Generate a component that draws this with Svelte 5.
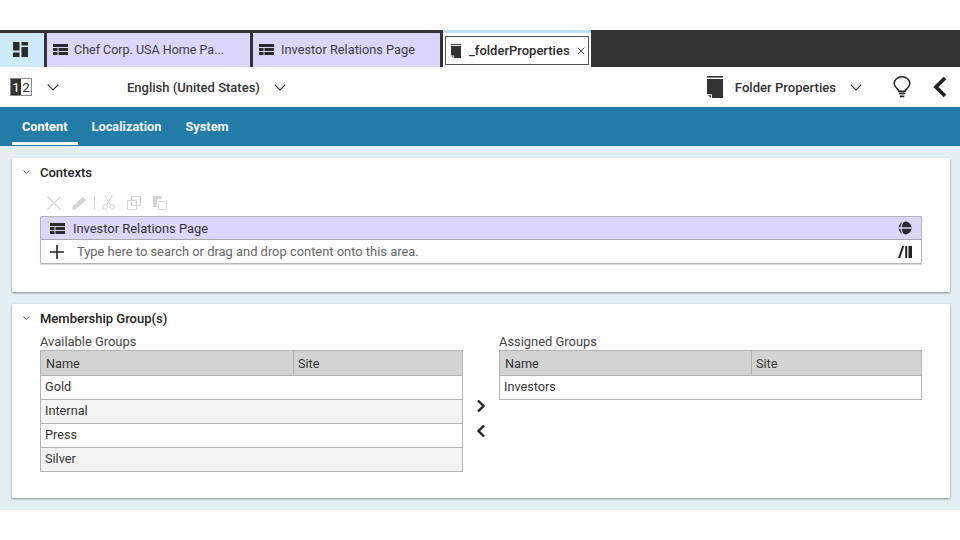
<script>
  const available = ['Gold', 'Internal', 'Press', 'Silver'];
</script>

{#snippet pageIcon()}
  <svg viewBox="0 0 15 11" width="15" height="11">
    <path d="M0 0h15v3H0z M0 4h4.500v3H0z M5.500 4H15v3H5.500z M0 8h4.500v3H0z M5.500 8H15v3H5.500z" fill="#2b2b2b" />
  </svg>
{/snippet}

{#snippet folderIcon(w, h)}
  <svg viewBox="0 0 16 22" width={w} height={h}>
    <path d="M0 0h16v1.600H0z" fill="#333" />
    <path d="M0 3h16v19H5v-3.800H0z" fill="#333" />
    <path d="M1 19.200h3V22z" fill="#333" />
  </svg>
{/snippet}

{#snippet chevron(w)}
  <svg viewBox="0 0 12 7" width={w} height={w * 7 / 12}>
    <path d="M.7.7 6 6l5.300-5.300" fill="none" stroke="#333" stroke-width="1.200" />
  </svg>
{/snippet}

{#snippet table(rows, nameWidth)}
  <div class="table">
    <div class="thead">
      <span class="th-name" style="width: {nameWidth}px">Name</span>
      <span class="th-site">Site</span>
    </div>
    {#each rows as row, i}
      <div class="row" class:odd={i % 2 === 1}>{row}</div>
    {/each}
  </div>
{/snippet}

<div class="page">
  <div class="tabbar">
    <div class="tab-home">
      <svg viewBox="0 0 15 15" width="15" height="15">
        <path d="M0 0h6.500v8.500H0z M8.500 0H15v3.500H8.500z M8.500 5H15v10H8.500z M0 10.500h6.500V15H0z" fill="#2b2b2b" />
      </svg>
    </div>
    <div class="tab tab-a">
      {@render pageIcon()}
      <span>Chef Corp. USA Home Pa...</span>
    </div>
    <div class="tab tab-b">
      {@render pageIcon()}
      <span>Investor Relations Page</span>
    </div>
    <div class="tab-active-wrap">
      <div class="tab-active">
        {@render folderIcon(10, 14)}
        <span class="active-name">_folderProperties</span>
        <svg class="close" viewBox="0 0 8 8" width="8" height="8">
          <path d="M.8.8l6.400 6.400M7.200.8.8 7.200" stroke="#444" stroke-width="1" />
        </svg>
      </div>
    </div>
    <div class="tab-rest"></div>
  </div>

  <div class="toolbar">
    <div class="version"><span class="v1">1</span><span class="v2">2</span></div>
    <span class="ver-chev">{@render chevron(12)}</span>
    <span class="lang">English (United States)</span>
    <span class="lang-chev">{@render chevron(12)}</span>
    <div class="spacer"></div>
    {@render folderIcon(16, 22)}
    <span class="doc-type">Folder Properties</span>
    <span class="doc-chev">{@render chevron(12)}</span>
    <svg class="bulb" viewBox="0 0 18 22" width="18" height="22">
      <path d="M5.800 15.200C5.400 12.800 1.200 11.200 1.200 7.400a7.800 6.600 0 0 1 15.600 0c0 3.800-4.200 5.400-4.600 7.800z" fill="none" stroke="#222" stroke-width="1.500" />
      <path d="M5.800 17.400h6.400M6.800 20.400h4.400" stroke="#222" stroke-width="1.600" />
    </svg>
    <svg class="back" viewBox="0 0 14 22" width="14" height="22">
      <path d="M12 2 3 11l9 9" fill="none" stroke="#222" stroke-width="3.800" />
    </svg>
  </div>

  <nav class="nav">
    <span class="nav-item active">Content</span>
    <span class="nav-item">Localization</span>
    <span class="nav-item">System</span>
  </nav>

  <main class="content">
    <section class="card card-contexts">
      <header class="card-head">
        {@render chevron(7)}
        <h2>Contexts</h2>
      </header>
      <div class="card-body">
        <div class="actions">
          <svg viewBox="0 0 14 14" width="14" height="14"><path d="M.5.5l13 13M13.500.5l-13 13" stroke="#d4d4d4" stroke-width="1.100" /></svg>
          <svg class="a-pen" viewBox="0 0 15 14" width="15" height="14"><path d="M0 14l1-4L11 1l3 3-10 9z" fill="#d4d4d4" /></svg>
          <span class="a-sep"></span>
          <svg class="a-cut" viewBox="0 0 13 15" width="13" height="15"><path d="M2.500 0l6 10M10.500 0l-6 10" stroke="#d4d4d4" fill="none" /><circle cx="3" cy="12" r="2.300" fill="none" stroke="#d4d4d4" /><circle cx="10" cy="12" r="2.300" fill="none" stroke="#d4d4d4" /></svg>
          <svg class="a-copy" viewBox="0 0 14 14" width="14" height="14"><path d="M4.500.5h9v9h-9z M.5 4.500h9v9h-9z" fill="#fff" stroke="#d4d4d4" /></svg>
          <svg class="a-paste" viewBox="0 0 14 14" width="14" height="14"><path d="M0 0h9v3H0z M0 3h4v8H0z" fill="#d4d4d4" /><path d="M5.500 5.500h8v8h-8z" fill="#fff" stroke="#d4d4d4" /></svg>
        </div>
        <div class="picker">
          <div class="picker-item">
            {@render pageIcon()}
            <span class="picker-name">Investor Relations Page</span>
            <svg viewBox="0 0 14 14" width="14" height="14">
              <path d="M3.800 6.300C3.900 3.300 5 1.200 7 .6c3 0 6 2 6.700 5.700z M3.800 7.700c.1 3 1.200 5.100 3.200 5.700 3 0 6-2 6.700-5.700z" fill="#2b2b2b" />
              <path d="M4.700 1C2.500 1.900 1 3.800.6 6.300h1.800C2.600 4.300 3.400 2.300 4.700 1z M4.700 13C2.500 12.100 1 10.200.6 7.700h1.800c.2 2 1 4 2.300 5.300z" fill="#2b2b2b" />
            </svg>
          </div>
          <div class="picker-search">
            <svg viewBox="0 0 14 14" width="14" height="14"><path d="M7 0v14M0 7h14" stroke="#222" stroke-width="1.600" /></svg>
            <span class="placeholder">Type here to search or drag and drop content onto this area.</span>
            <svg viewBox="0 0 14 13" width="14" height="13"><path d="M0 13 4.200 1h2.100L2.100 13z M7.200 1h2v12h-2z M10.500 1H14v12h-3.500z" fill="#222" /></svg>
          </div>
        </div>
      </div>
    </section>

    <section class="card card-groups">
      <header class="card-head">
        {@render chevron(7)}
        <h2>Membership Group(s)</h2>
      </header>
      <div class="groups">
        <div class="group">
          <div class="group-label">Available Groups</div>
          {@render table(available, 253)}
        </div>
        <div class="movers">
          <svg viewBox="0 0 10 14" width="10" height="14"><path d="M2 1.500 7.500 7 2 12.500" fill="none" stroke="#222" stroke-width="2.400" /></svg>
          <svg viewBox="0 0 10 14" width="10" height="14"><path d="M8 1.500 2.500 7 8 12.500" fill="none" stroke="#222" stroke-width="2.400" /></svg>
        </div>
        <div class="group">
          <div class="group-label">Assigned Groups</div>
          {@render table(['Investors'], 252)}
        </div>
      </div>
    </section>
  </main>
</div>

<style>
  :global(body) {
    margin: 0;
    background: #fff;
  }

  .page {
    width: 960px;
    height: 540px;
    padding-top: 30px;
    box-sizing: border-box;
    font-family: Roboto, "Liberation Sans", sans-serif;
    font-size: 13px;
    color: #333;
    overflow: hidden;
    display: flex;
    flex-direction: column;
  }

  .tabbar {
    display: flex;
    height: 37px;
    flex: none;
    background: #333;
  }

  .tab-home {
    width: 44px;
    margin-top: 3px;
    padding: 0 3px 2px 0;
    box-sizing: border-box;
    background: #cdeafa;
    display: flex;
    align-items: center;
    justify-content: center;
  }

  .tab {
    margin-top: 3px;
    margin-left: 3px;
    background: #dcd6fd;
    display: flex;
    align-items: center;
    gap: 6px;
    padding: 0 0 2px 6px;
    box-sizing: border-box;
    color: #3c3c3c;
    font-size: 12.800px;
  }

  .tab-a { width: 203px; font-size: 12.500px; }
  .tab-b { width: 187px; gap: 7px; }

  .tab-active-wrap {
    width: 148px;
    margin-left: 3px;
    background: #fff;
    border-top: 3px solid #b9e4fb;
    box-sizing: border-box;
    padding: 3px 2px 2px;
  }

  .tab-active {
    height: 100%;
    box-sizing: border-box;
    border: 1px solid #555;
    display: flex;
    align-items: center;
    padding-left: 5px;
    background: #fff;
  }

  .active-name {
    margin-left: 8px;
    font-weight: 500;
    font-size: 13px;
    color: #2b2b2b;
  }

  .close { margin-left: 7px; }

  .tab-rest {
    flex: 1;
    margin-left: 1px;
    background: #333;
  }

  .toolbar {
    height: 40px;
    flex: none;
    display: flex;
    align-items: center;
    padding-left: 10px;
    background: #fff;
    box-sizing: border-box;
  }

  .version {
    display: flex;
    width: 22px;
    height: 18px;
    font-size: 13.500px;
    line-height: 16px;
    text-align: center;
    box-sizing: border-box;
    border: 1px solid #888;
  }

  .v1 { width: 10px; background: #333; color: #fff; }
  .v2 { width: 10px; color: #333; }

  .ver-chev { margin-left: 15px; display: flex; }

  .lang {
    margin-left: 68px;
    font-weight: 500;
    font-size: 13px;
    color: #333;
  }

  .lang-chev { margin-left: 14px; display: flex; }

  .spacer { flex: 1; }

  .doc-type {
    margin-left: 12px;
    font-weight: 500;
    font-size: 13.100px;
  }

  .doc-chev { margin-left: 14px; display: flex; }
  .bulb { margin-left: 31px; }
  .back { margin-left: 22px; margin-right: 13px; }

  .nav {
    height: 39px;
    flex: none;
    background: #237ca8;
    border-bottom: 1px solid #1a74a2;
    box-sizing: border-box;
    display: flex;
    padding-left: 12px;
    gap: 4px;
  }

  .nav-item {
    padding: 0 10px;
    height: 38px;
    box-sizing: border-box;
    line-height: 40px;
    color: #fff;
    font-weight: 700;
    font-size: 12.800px;
    opacity: 0.92;
  }

  .nav-item.active {
    border-bottom: 3px solid #fff;
    opacity: 1;
  }

  .content {
    height: 364px;
    flex: none;
    background: #e4eff5;
    padding: 12px 10px 0 12px;
    box-sizing: border-box;
    display: flex;
    flex-direction: column;
    gap: 12px;
  }

  .card {
    background: #fff;
    box-shadow: 0 1px 2px rgba(0, 0, 0, 0.45);
    box-sizing: border-box;
  }

  .card-contexts { height: 134px; }
  .card-groups { height: 194px; }

  .card-head {
    height: 29px;
    display: flex;
    align-items: center;
    padding-left: 11px;
  }

  h2 {
    margin: 0 0 0 10px;
    font-size: 13px;
    font-weight: 500;
    color: #222;
  }

  .card-body { padding: 0 28px; }

  .actions {
    height: 29px;
    display: flex;
    align-items: center;
    padding: 2px 0 0 7px;
    box-sizing: border-box;
  }

  .a-pen { margin-left: 11px; }
  .a-sep { width: 1px; height: 13px; background: #d4d4d4; margin-left: 7px; }
  .a-cut { margin-left: 7px; }
  .a-copy { margin-left: 12px; }
  .a-paste { margin-left: 12px; }

  .picker {
    border: 1px solid #b4b4b4;
    border-radius: 1px;
    box-shadow: 0 1px 1px rgba(0, 0, 0, 0.15);
  }

  .picker-item {
    height: 22px;
    background: #dcd6fd;
    border-bottom: 1px solid #aaa;
    display: flex;
    align-items: center;
    padding: 0 9px;
    gap: 8px;
    font-size: 12.900px;
  }

  .picker-name { flex: 1; color: #333; }

  .picker-search {
    height: 23px;
    display: flex;
    align-items: center;
    padding: 0 9px;
  }

  .placeholder {
    flex: 1;
    margin-left: 13px;
    color: #666;
    font-size: 12.900px;
  }

  .groups {
    display: flex;
    padding-left: 28px;
  }

  .group-label {
    height: 17px;
    line-height: 17px;
    font-size: 12.900px;
    color: #444;
  }

  .movers {
    width: 36px;
    margin-top: 66px;
    display: flex;
    flex-direction: column;
    align-items: center;
    gap: 11px;
  }

  .table {
    width: 423px;
    border: 1px solid #b4b4b4;
    box-sizing: border-box;
    font-size: 12.700px;
    color: #333;
  }

  .thead {
    height: 24px;
    background: #d3d3d3;
    display: flex;
    align-items: center;
  }

  .th-name {
    padding-left: 5px;
    box-sizing: border-box;
    height: 100%;
    line-height: 26px;
    border-right: 1px solid #b4b4b4;
  }

  .th-site { padding-left: 4px; }

  .row {
    height: 24px;
    line-height: 21px;
    box-sizing: border-box;
    padding-left: 4px;
    border-top: 1px solid #b4b4b4;
    background: #fff;
  }

  .row.odd { background: #f3f3f3; }
</style>
